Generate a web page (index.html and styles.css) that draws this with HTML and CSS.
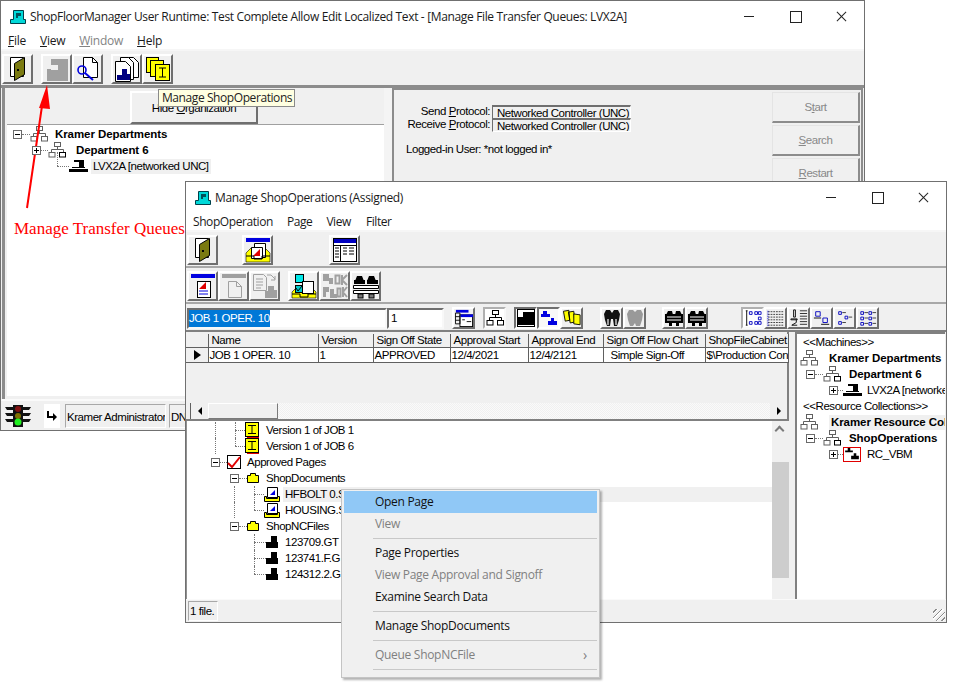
FILE: index.html
```html
<!DOCTYPE html>
<html lang="en">
<head>
<meta charset="utf-8">
<title>ShopFloorManager</title>
<link rel="stylesheet" href="styles.css">
</head>
<body>
<svg class="defs" width="0" height="0">
  <symbol id="app" viewBox="0 0 16 16"><path d="M3.500 1.500h10v9h2v4h-15v-4h3z" fill="#00d8d8" stroke="#00404a"/><path d="M6 4h5v3H8v2H6z" fill="#00505a"/></symbol>
  <symbol id="door" viewBox="0 0 26 26"><path d="M5.500 1.500h13v19h-13z" fill="#fff" stroke="#000"/><path d="M19.500 1.500v17l-10 6v-17z" fill="#7a7a10" stroke="#000"/><rect x="12" y="13" width="2" height="2" fill="#000"/></symbol>
  <symbol id="mach-off" viewBox="0 0 26 26"><path d="M7 3h17v11H14V9H7z" fill="#a0a0a0"/><path d="M3 14h21v11H3z" fill="#a0a0a0"/><path d="M3 13h4v1H3z" fill="#a0a0a0"/></symbol>
  <symbol id="docfind" viewBox="0 0 26 26"><path d="M8.500 1.500h9l5 5v15h-14z" fill="#fff" stroke="#000"/><path d="M17.500 1.500v5h5" fill="none" stroke="#000"/><circle cx="7" cy="14" r="4" fill="none" stroke="#0000e0" stroke-width="1.600"/><path d="M10 17l8 7" stroke="#0000e0" stroke-width="2"/></symbol>
  <symbol id="docs" viewBox="0 0 26 26"><path d="M11.500 1.500h8l5 5v15h-13z" fill="#fff" stroke="#000"/><path d="M6.500 1.500h8l5 5v17h-13z" fill="#fff" stroke="#000"/><path d="M1.500 5.500h10l5 5v15h-15z" fill="#fff" stroke="#000"/><path d="M8 13h5v5h3v6H3v-5h5z" fill="#000080"/></symbol>
  <symbol id="yellows" viewBox="0 0 26 26"><rect x="1.500" y="1.500" width="12" height="15" fill="#ffff00" stroke="#000"/><rect x="5.500" y="4.500" width="13" height="16" fill="#ffff00" stroke="#000"/><rect x="10.500" y="8.500" width="14" height="16" fill="#ffff00" stroke="#000"/><path d="M14 12h7M17.500 12v9M14 21h7" stroke="#000" fill="none"/></symbol>
  <symbol id="inbox" viewBox="0 0 26 26"><rect x="1" y="1" width="24" height="4" fill="#0000e0"/><path d="M1 16l5-5h14l5 5v9H1z" fill="#ffff00" stroke="#000" stroke-width=".6"/><path d="M9.500 6.500h11v14h-11z" fill="#fff" stroke="#000"/><path d="M6.500 10.500h11v11h-11z" fill="#fff" stroke="#000"/><path d="M15 12v7H8z" fill="#e00000"/><path d="M1 19h8v3h8v-3h8" fill="none" stroke="#000"/></symbol>
  <symbol id="table" viewBox="0 0 26 26"><rect x="1.500" y="1.500" width="23" height="23" fill="#fff" stroke="#000"/><rect x="2" y="2" width="22" height="4" fill="#0000c0"/><path d="M2 8.500h22M8.500 8v16M11 11h4M17 11h5M11 14h4M17 14h5M11 17h4M17 17h5M3 11h4M3 14h4M3 17h4M3 20h4" stroke="#000" fill="none"/></symbol>
  <symbol id="page" viewBox="0 0 26 26"><rect x="1" y="1" width="24" height="4" fill="#0000e0"/><rect x="7.500" y="8.500" width="13" height="16" fill="#fff" stroke="#000"/><path d="M16 9v7H9z" fill="#e00000"/><path d="M9 18h9M9 21h9" stroke="#0000e0"/></symbol>
  <symbol id="page-off" viewBox="0 0 26 26"><rect x="1" y="1" width="24" height="4" fill="#a0a0a0"/><path d="M7.500 8.500h8l5 5v11h-13z" fill="none" stroke="#a0a0a0"/><path d="M15.500 8.500v5h5" fill="none" stroke="#a0a0a0"/></symbol>
  <symbol id="copy-off" viewBox="0 0 26 26"><path d="M1.500 1.500h10l3 3v13h-13z" fill="none" stroke="#a0a0a0"/><path d="M4 6h7M4 9h7M4 12h7M4 15h5M15 2h4l4 4M23 3v4h-4" stroke="#a0a0a0" fill="none"/><path d="M16 13h6v4h3v8H13v-7h3z" fill="#a0a0a0"/></symbol>
  <symbol id="flow" viewBox="0 0 26 26"><rect x="4.500" y="1.500" width="8" height="8" fill="#00e8e8" stroke="#000"/><path d="M1 19l3-3h18l3 3v6H1z" fill="#ffff00" stroke="#000" stroke-width=".6"/><rect x="11.500" y="8.500" width="11" height="12" fill="#fff" stroke="#000"/><rect x="4.500" y="12.500" width="7" height="7" fill="#00c8c8" stroke="#000"/><path d="M5 15l2 3 4-5" stroke="#000" fill="none"/><path d="M1 21h8v3h8v-3h8" fill="none" stroke="#000"/></symbol>
  <symbol id="ok-off" viewBox="0 0 26 26"><path d="M1 1h6v4h4v6H7V8H1zM1 14h6v5H4v5H1zM8 16h4v5h3v4H8z" fill="#a0a0a0"/><path d="M13.500 2.500h4v8h-4zM20 2v10M20 7l5-5M20 7l5 5M15.500 15.500h3v8h-3zM21 14v10M21 19l4-5M21 19l4 5" fill="none" stroke="#a0a0a0" stroke-width="2"/></symbol>
  <symbol id="binwall" viewBox="0 0 26 26"><path d="M2 8l2-5h5l2 5zM14 8l2-5h5l2 5z" fill="#000"/><rect x="1" y="7" width="11" height="4"/><rect x="14" y="7" width="11" height="4"/><path d="M.5 12.500h25v3H.5zM.5 17.500h25v3H.5z" fill="#fff" stroke="#000"/><rect x="5" y="21" width="5" height="4" fill="#777" stroke="#000"/><rect x="16" y="21" width="5" height="4" fill="#777" stroke="#000"/></symbol>
  <symbol id="grid-ico" viewBox="0 0 20 20"><rect x="1" y="1" width="14" height="3" fill="#0000e0"/><rect x="5.500" y="6.500" width="14" height="13" fill="#fff" stroke="#000"/><rect x="6" y="6" width="14" height="3" fill="#0000e0"/><path d="M.5 4.500h5v12h-5zM.5 8.500h5M.5 12.500h5M8 12h3M13 14h5" stroke="#000" fill="none"/></symbol>
  <symbol id="org" viewBox="0 0 18 16"><rect x="6.500" y=".5" width="6" height="4" fill="#fff" stroke="#606060"/><path d="M9.500 4.500v3M3.500 10.500v-3h12v3" fill="none" stroke="#606060"/><rect x="1" y="10.500" width="6" height="4.500" fill="#fff" stroke="#606060"/><rect x="11.500" y="10.500" width="6" height="4.500" fill="#fff" stroke="#606060"/></symbol>
  <symbol id="org-sel" viewBox="0 0 18 16"><rect x="6.500" y=".5" width="6" height="4" fill="#fff" stroke="#606060"/><path d="M9.500 4.500v3M3.500 10.500v-3h12v3" fill="none" stroke="#606060"/><rect x="1" y="10.500" width="6" height="4.500" fill="#fff" stroke="#606060"/><rect x="11.500" y="10.500" width="6" height="4.500" fill="#fff" stroke="#000"/></symbol>
  <symbol id="org-b" viewBox="0 0 18 16"><rect x="6.500" y=".5" width="6" height="4" fill="#fff" stroke="#000"/><path d="M9.500 4.500v3M3.500 10.500v-3h12v3" fill="none" stroke="#000"/><rect x="1" y="10.500" width="6" height="4.500" fill="#fff" stroke="#000"/><rect x="11.500" y="10.500" width="6" height="4.500" fill="#fff" stroke="#000"/></symbol>
  <symbol id="mach" viewBox="0 0 19 14"><path d="M5 1h10v2H5zM10 3h5v5h-5zM3 8h13v1H3zM0 10h19v3H0z" fill="#000"/></symbol>
  <symbol id="ibeam" viewBox="0 0 14 16"><rect x=".5" y=".5" width="13" height="14" fill="#ffff00" stroke="#000"/><path d="M3 3.500h8M7 3.500v8M3 11.500h8" stroke="#000" fill="none"/><path d="M2 15.500h12" stroke="#e00000"/></symbol>
  <symbol id="check" viewBox="0 0 14 14"><rect x=".5" y=".5" width="13" height="13" fill="#fff" stroke="#000"/><path d="M1 8l4 4 8-10" fill="none" stroke="#e00000" stroke-width="2"/></symbol>
  <symbol id="folder" viewBox="0 0 12 10"><path d="M.5 2.500h3v-2h5v2h3v7H.5z" fill="#ffff00" stroke="#000"/></symbol>
  <symbol id="trayp" viewBox="0 0 16 16"><path d="M3.500 1.500h10v10h-10z" fill="#fff" stroke="#000"/><path d="M11 4v5H6z" fill="#0000e0"/><path d="M.5 10.500h2v2h11v-2h2v5H.5z" fill="#ffff00" stroke="#000"/></symbol>
  <symbol id="block" viewBox="0 0 12 12"><path d="M5 0h6v6h1v6H0V6h5z" fill="#000"/></symbol>
  <symbol id="blocks2" viewBox="0 0 16 14"><path d="M3 0h3v3h3v2H0V3h3zM10 6h3v3h3v4H7V9h3z" fill="#000"/></symbol>
  <symbol id="bigblock" viewBox="0 0 18 18"><rect width="18" height="18"/><path d="M1 1h5v7H1z" fill="#fff"/><path d="M6 1h11v2H6zM1 16h16v1H1z" fill="#fff"/></symbol>
  <symbol id="blueblocks" viewBox="0 0 18 18"><path d="M3 2h4v3h3v3H1V5h2zM11 9h3v3h3v4H8v-4h3z" fill="#0000e0"/></symbol>
  <symbol id="yellow3" viewBox="0 0 20 18"><path d="M.5 1.500l6-1 1 11-5 1zM6 2.500l6-1 1 12-5 1z" fill="#ffff00" stroke="#000"/><path d="M12 4.500l7 1v11l-7-1z" fill="#ffff00" stroke="#000"/></symbol>
  <symbol id="binoc" viewBox="0 0 18 18"><path d="M3 1h4l2 3 2-3h4l2 4-1 6-2 6h-3l-1-7H8l-1 7H4L2 11 1 5z" fill="#111"/><path d="M5 10v6M13 10v6" stroke="#999" stroke-width="2"/></symbol>
  <symbol id="binoc-off" viewBox="0 0 18 18"><path d="M3 1h4l2 2 2-2h4l2 4-1 6-2 6h-4l-1-3-2 3H4L2 11 1 5z" fill="#999"/></symbol>
  <symbol id="binwall-s" viewBox="0 0 18 18"><path d="M1 6l2-4h4l1 4zM10 6l1-4h4l2 4z" fill="#000"/><rect y="5" width="18" height="9" fill="#000"/><path d="M2 8h14M2 11h14" stroke="#fff"/><rect x="4" y="14" width="3" height="3"/><rect x="11" y="14" width="3" height="3"/></symbol>
  <symbol id="v1" viewBox="0 0 20 20"><path d="M2 2h2M2 18h2M3 2v16" stroke="#000"/><path d="M6 3h3v3H6zM12 3h3v3h-3zM6 14h3v3H6zM12 14h3v3h-3zM16 9h3v3h-3zM16 3h3v3h-3zM16 14h3v3h-3z" fill="none" stroke="#0000c0"/></symbol>
  <symbol id="v2" viewBox="0 0 20 20"><path d="M1 3h18M1 6h18M1 9h18M1 12h18M1 15h18M1 18h18" stroke="#333" stroke-dasharray="2 1"/><path d="M1 2v17" stroke="#0000e0" stroke-dasharray="1 1"/></symbol>
  <symbol id="v3" viewBox="0 0 20 20"><path d="M4 1h2v8H4zM1 11h7v1H1zM7 12v3L2 18h6" stroke="#000" fill="none"/><path d="M11 2h8M11 5h8M11 8h8M11 11h8M11 14h8M11 17h8" stroke="#222"/></symbol>
  <symbol id="v4" viewBox="0 0 20 20"><path d="M3 3h5v5H3zM11 10h5v5h-5z" fill="none" stroke="#0000c0"/><path d="M1 10h8M9 17h9" stroke="#000"/></symbol>
  <symbol id="v5" viewBox="0 0 20 20"><path d="M3 3h3v3H3zM10 8h3v3h-3zM3 14h3v3H3z" fill="none" stroke="#0000c0"/><path d="M7 4h4M14 9h4M7 15h4" stroke="#333"/></symbol>
  <symbol id="v6" viewBox="0 0 20 20"><path d="M2 3h3v3H2zM11 3h3v3h-3zM2 9h3v3H2zM11 9h3v3h-3zM2 15h3v3H2zM11 15h3v3h-3z" fill="none" stroke="#0000c0"/><path d="M6 4h4M15 4h4M6 10h4M15 10h4M6 16h4M15 16h4" stroke="#333"/></symbol>
  <symbol id="light" viewBox="0 0 26 22"><path d="M8 0h10v22H8z" fill="#111"/><path d="M0 2h8v3H2zM26 2h-8v3h6zM0 8h8v3H2zM26 8h-8v3h6zM0 14h8v3H2zM26 14h-8v3h6z" fill="#111"/><circle cx="13" cy="4" r="3" fill="#801010"/><circle cx="13" cy="11" r="3" fill="#807000"/><circle cx="13" cy="17" r="3.500" fill="#20f020"/></symbol>
  <symbol id="bend" viewBox="0 0 12 12"><path d="M2 1v6h7" fill="none" stroke="#000" stroke-width="2"/><path d="M7 3l4 4-4 4z" fill="#000"/></symbol>
</svg>

<section class="win win-back">
  <header class="title"><svg class="ti"><use href="#app"/></svg><span class="ttext">ShopFloorManager User Runtime: Test Complete Allow Edit Localized Text - [Manage File Transfer Queues: LVX2A]</span>
    <span class="caps"><i class="cap-min"></i><i class="cap-max"></i><i class="cap-x"></i></span></header>
  <nav class="menu m1"><span class="mi-file"><u>F</u>ile</span><span class="mi-view"><u>V</u>iew</span><span class="mi-win off"><u>W</u>indow</span><span class="mi-help"><u>H</u>elp</span></nav>
  <div class="bar bar1">
    <button class="btn"><svg class="big"><use href="#door"/></svg></button>
    <button class="btn gap8"><svg class="big"><use href="#mach-off"/></svg></button>
    <button class="btn"><svg class="big"><use href="#docfind"/></svg></button>
    <button class="btn gap8"><svg class="big"><use href="#docs"/></svg></button>
    <button class="btn"><svg class="big"><use href="#yellows"/></svg></button>
  </div>
  <div class="body1">
    <div class="left1">
      <div class="hidewrap"><button class="hide">Hide <u>O</u>rganization</button></div>
      <div class="tree tree1">
        <div class="row r1a"><i class="exp minus"></i><i class="dot w8"></i><svg class="org"><use href="#org"/></svg><b class="lb ml9">Kramer Departments</b></div>
        <div class="row r1b"><i class="exp plus"></i><i class="dot w7"></i><svg class="org"><use href="#org-sel"/></svg><b class="lb ml10">Department 6</b></div>
        <div class="row r1c"><i class="dot w12"></i><svg class="mach"><use href="#mach"/></svg><span class="lb ml3 sel">LVX2A [networked UNC]</span></div>
      </div>
    </div>
    <div class="split"></div>
    <div class="right1">
      <div class="proto">
        <div class="protorow"><span class="plabel">Send <u>P</u>rotocol:</span><span class="pval">Networked Controller (UNC)</span></div>
        <div class="protorow"><span class="plabel">Receive <u>P</u>rotocol:</span><span class="pval">Networked Controller (UNC)</span></div>
        <p class="logged">Logged-in User: *not logged in*</p>
      </div>
      <div class="actions">
        <button class="act">S<u>t</u>art</button>
        <button class="act"><u>S</u>earch</button>
        <button class="act"><u>R</u>estart</button>
      </div>
    </div>
  </div>
  <footer class="status1">
    <svg class="light"><use href="#light"/></svg>
    <span class="bendbox"><svg class="bend"><use href="#bend"/></svg></span>
    <span class="spanel admin">Kramer Administrator</span>
    <span class="spanel dn">DN</span>
  </footer>
</section>

<div class="tip">Manage ShopOperations</div>
<div class="note">Manage Transfer Queues</div>
<svg class="arrow" width="60" height="150" viewBox="0 0 60 150"><path d="M27 130L42 28" stroke="#f00" stroke-width="2" fill="none"/><path d="M47 7L39 30L50 31z" fill="#f00"/></svg>

<section class="win win-front">
  <header class="title t2"><svg class="ti"><use href="#app"/></svg><span class="ttext">Manage ShopOperations (Assigned)</span>
    <span class="caps"><i class="cap-min"></i><i class="cap-max"></i><i class="cap-x"></i></span></header>
  <nav class="menu m2"><span class="mi-op">ShopOperation</span><span class="mi-page">Page</span><span class="mi-v2">View</span><span>Filter</span></nav>
  <div class="bar bar21">
    <button class="btn"><svg class="big"><use href="#door"/></svg></button>
    <button class="btn gap24"><svg class="big"><use href="#inbox"/></svg></button>
    <button class="btn gap56"><svg class="big"><use href="#table"/></svg></button>
  </div>
  <div class="bar bar22">
    <button class="btn"><svg class="big"><use href="#page"/></svg></button>
    <button class="btn"><svg class="big"><use href="#page-off"/></svg></button>
    <button class="btn"><svg class="big"><use href="#copy-off"/></svg></button>
    <button class="btn gap8"><svg class="big"><use href="#flow"/></svg></button>
    <button class="btn"><svg class="big"><use href="#ok-off"/></svg></button>
    <button class="btn"><svg class="big"><use href="#binwall"/></svg></button>
  </div>
  <div class="bar bar23">
    <span class="field jobf"><span class="picked">JOB 1 OPER. 10</span></span>
    <span class="field numf">1</span>
    <button class="sb g8"><svg class="sm"><use href="#grid-ico"/></svg></button>
    <button class="sb g8 latch"><svg class="sm"><use href="#org-b"/></svg></button>
    <button class="sb g8 down"><svg class="sm"><use href="#bigblock"/></svg></button>
    <button class="sb down"><svg class="sm"><use href="#blueblocks"/></svg></button>
    <button class="sb"><svg class="sm"><use href="#yellow3"/></svg></button>
    <button class="sb g17"><svg class="sm"><use href="#binoc"/></svg></button>
    <button class="sb"><svg class="sm"><use href="#binoc-off"/></svg></button>
    <button class="sb g16"><svg class="sm"><use href="#binwall-s"/></svg></button>
    <button class="sb"><svg class="sm"><use href="#binwall-s"/></svg></button>
    <button class="sb g33 latch"><svg class="sm"><use href="#v1"/></svg></button>
    <button class="sb"><svg class="sm"><use href="#v2"/></svg></button>
    <button class="sb"><svg class="sm"><use href="#v3"/></svg></button>
    <button class="sb"><svg class="sm"><use href="#v4"/></svg></button>
    <button class="sb"><svg class="sm"><use href="#v5"/></svg></button>
    <button class="sb"><svg class="sm"><use href="#v6"/></svg></button>
  </div>
  <div class="work">
    <div class="maincol">
      <div class="gridbox">
        <table class="grid">
          <colgroup><col class="c0"><col class="c1"><col class="c2"><col class="c3"><col class="c4"><col class="c5"><col class="c6"><col class="c7"></colgroup>
          <thead><tr><th></th><th>Name</th><th>Version</th><th>Sign Off State</th><th>Approval Start</th><th>Approval End</th><th>Sign Off Flow Chart</th><th>ShopFileCabinet</th></tr></thead>
          <tbody><tr><td class="ptr"><i class="tri-r"></i></td><td>JOB 1 OPER. 10</td><td>1</td><td>APPROVED</td><td>12/4/2021</td><td>12/4/2121</td><td class="ind">Simple Sign-Off</td><td>$\Production Control</td></tr></tbody>
        </table>
        <div class="hscroll"><span class="hgap"></span><span class="arrowbtn"><i class="tri-l"></i></span><span class="hthumb"></span><span class="htrack"></span><span class="arrowbtn"><i class="tri-r small"></i></span></div>
      </div>
      <div class="treewrap">
        <div class="tree tree2">
          <div class="row p47"><i class="gd g27"></i><i class="gd g47 full"></i><i class="dot w10"></i><svg class="i14"><use href="#ibeam"/></svg><span class="lb ml7">Version 1 of JOB 1</span></div>
          <div class="row p47"><i class="gd g27"></i><i class="gd g47 half"></i><i class="dot w10"></i><svg class="i14"><use href="#ibeam"/></svg><span class="lb ml7">Version 1 of JOB 6</span></div>
          <div class="row p23"><i class="exp minus"></i><i class="dot w7"></i><svg class="i14s"><use href="#check"/></svg><span class="lb ml6">Approved Pages</span></div>
          <div class="row p42"><i class="exp minus"></i><i class="dot w8"></i><svg class="fold"><use href="#folder"/></svg><span class="lb ml7">ShopDocuments</span></div>
          <div class="row p66"><i class="gd g46"></i><i class="gd g66 full"></i><i class="dot w10"></i><svg class="i16"><use href="#trayp"/></svg><span class="lb sel grow">HFBOLT 0.SLDPRT</span></div>
          <div class="row p66"><i class="gd g46"></i><i class="gd g66 half"></i><i class="dot w10"></i><svg class="i16"><use href="#trayp"/></svg><span class="lb ml5">HOUSING.SLDPRT</span></div>
          <div class="row p42"><i class="exp minus"></i><i class="dot w8"></i><svg class="fold"><use href="#folder"/></svg><span class="lb ml7">ShopNCFiles</span></div>
          <div class="row p66"><i class="gd g66 full"></i><i class="dot w12"></i><svg class="i12"><use href="#block"/></svg><span class="lb ml7">123709.GT</span></div>
          <div class="row p66"><i class="gd g66 full"></i><i class="dot w12"></i><svg class="i12"><use href="#block"/></svg><span class="lb ml7">123741.F.G</span></div>
          <div class="row p66"><i class="gd g66 half"></i><i class="dot w12"></i><svg class="i12"><use href="#block"/></svg><span class="lb ml7">124312.2.G</span></div>
        </div>
        <div class="vscroll"><span class="varrow"><i class="chev"></i></span><span class="vtrack1"></span><span class="vthumb"></span><span class="vtrack2"></span></div>
      </div>
    </div>
    <aside class="side">
      <div class="row sp8"><span class="lb">&lt;&lt;Machines&gt;&gt;</span></div>
      <div class="row sp4"><svg class="org"><use href="#org"/></svg><b class="lb ml11">Kramer Departments</b></div>
      <div class="row sp10"><i class="exp minus"></i><i class="dot w8"></i><svg class="org"><use href="#org-sel"/></svg><b class="lb ml8">Department 6</b></div>
      <div class="row sp33"><i class="exp plus"></i><i class="dot w5"></i><svg class="mach"><use href="#mach"/></svg><span class="lb ml5 nowrap">LVX2A [networked UNC]</span></div>
      <div class="row sp8"><span class="lb">&lt;&lt;Resource Collections&gt;&gt;</span></div>
      <div class="row sp4"><svg class="org"><use href="#org"/></svg><b class="lb ml11 sel grow nowrap">Kramer Resource Collections</b></div>
      <div class="row sp10"><i class="exp minus"></i><i class="dot w8"></i><svg class="org"><use href="#org-sel"/></svg><b class="lb ml8">ShopOperations</b></div>
      <div class="row sp33"><i class="exp plus"></i><i class="dot w5"></i><span class="redbox"><svg class="rc"><use href="#blocks2"/></svg></span><span class="lb ml6">RC_VBM</span></div>
    </aside>
  </div>
  <footer class="status2"><span class="files">1 file.</span><i class="grip"></i></footer>
</section>

<div class="ctx">
  <div class="ci hot">Open Page</div>
  <div class="ci off">View</div>
  <div class="sep"></div>
  <div class="ci">Page Properties</div>
  <div class="ci off">View Page Approval and Signoff</div>
  <div class="ci">Examine Search Data</div>
  <div class="sep"></div>
  <div class="ci">Manage ShopDocuments</div>
  <div class="sep"></div>
  <div class="ci off">Queue ShopNCFile<span class="more">›</span></div>
  <div class="sep"></div>
</div>
</body>
</html>
```

FILE: styles.css
```css
* { box-sizing: border-box; }
html, body { margin: 0; padding: 0; background: #fff; }
body { width: 963px; height: 700px; overflow: hidden; position: relative; font: 11.5px/14px "Liberation Sans", Arial, sans-serif; letter-spacing: -.45px; color: #000; }
.defs { position: absolute; }
svg { display: block; flex: none; }
i { display: block; flex: none; font-style: normal; }
button { font: inherit; letter-spacing: inherit; padding: 0; margin: 0; color: inherit; }

.win { position: absolute; background: #f0f0f0; border: 1px solid #707070; display: flex; flex-direction: column; overflow: hidden; }
.win-back { left: 0; top: 0; width: 865px; height: 431px; }
.win-front { left: 185px; top: 181px; width: 762px; height: 442px; }

.title { height: 31px; flex: none; background: #fff; display: flex; align-items: center; padding-left: 9px; font: 12px/16px "Open Sans", sans-serif; color: #1a1a1a; white-space: nowrap; letter-spacing: -.35px; }
.ti { width: 16px; height: 16px; margin-right: 4px; }
.ttext { flex: 1; }
.caps { display: flex; flex: none; width: 138px; height: 31px; letter-spacing: 0; }
.caps i { width: 46px; height: 31px; position: relative; }
.cap-min::after { content: ""; position: absolute; left: 18px; top: 15px; width: 10px; height: 1px; background: #222; }
.cap-max::after { content: ""; position: absolute; left: 18px; top: 10px; width: 10px; height: 10px; border: 1px solid #222; }
.cap-x::before, .cap-x::after { content: ""; position: absolute; left: 17px; top: 15px; width: 13px; height: 1px; background: #222; transform: rotate(45deg); }
.cap-x::after { transform: rotate(-45deg); }

.menu { flex: none; background: #fff; height: 19px; display: flex; font: 12px/17px "Open Sans", sans-serif; letter-spacing: -.25px; color: #1a1a1a; border-bottom: 2px solid #f6f6f6; }
.m1 { padding-left: 7px; }
.m2 { padding-left: 7px; letter-spacing: -.42px; }
.mi-file { margin-right: 14px; }
.mi-view { margin-right: 14px; }
.mi-win { margin-right: 14px; }
.mi-op { margin-right: 14px; }
.mi-page { margin-right: 14px; }
.mi-v2 { margin-right: 15px; }
.off { color: #838383; }

.bar { flex: none; display: flex; background: #f0f0f0; }
.bar1 { height: 37px; padding: 3px 0 0 1px; border-bottom: 3px solid #8c8c8c; }
.bar21 { height: 36px; padding: 3px 0 0 1px; border-bottom: 2px solid #a8a8a8; }
.bar22 { height: 36px; padding: 3px 0 0 1px; border-bottom: 2px solid #a8a8a8; }
.bar23 { height: 28px; padding: 3px 0 0 1px; align-items: flex-start; border-bottom: 2px solid #808080; }

.btn { width: 31px; height: 30px; border: 2px solid; border-color: #fff #6f6f6f #6f6f6f #fff; background: #f0f0f0; display: flex; align-items: center; justify-content: center; }
.big { width: 26px; height: 26px; }
.gap8 { margin-left: 8px; }
.gap24 { margin-left: 24px; }
.gap56 { margin-left: 56px; }

.sb { width: 23px; height: 22px; border: 2px solid; border-color: #fff #6f6f6f #6f6f6f #fff; background: #f0f0f0; display: flex; align-items: center; justify-content: center; }
.sm { width: 18px; height: 18px; }
.sb.down { border-color: #6f6f6f #fff #fff #6f6f6f; background: #f8f8f8; }
.sb.latch { border-color: #b0b0b0 #f8f8f8 #f8f8f8 #b0b0b0; background: #fff; }
.g8 { margin-left: 8px; }
.g16 { margin-left: 16px; }
.g17 { margin-left: 17px; }
.g33 { margin-left: 33px; }
.field { height: 21px; margin-top: 1px; background: #fff; border: 2px solid; border-color: #6f6f6f #f8f8f8 #f8f8f8 #6f6f6f; line-height: 17px; }
.jobf { width: 200px; }
.numf { width: 57px; padding-left: 2px; }
.picked { background: #0078d7; color: #fff; display: inline-block; height: 17px; }

.body1 { flex: 1; display: flex; min-height: 0; background: #f0f0f0; }
.left1 { width: 382px; flex: none; padding-left: 5px; border-left: 3px solid #8c8c8c; margin-left: 1px; display: flex; flex-direction: column; padding-bottom: 3px; }
.hidewrap { flex: none; height: 36px; display: flex; justify-content: flex-start; padding-left: 120px; padding-top: 3px; }
.hide { width: 128px; height: 33px; border: 2px solid; border-color: #fff #6f6f6f #6f6f6f #fff; background: #f0f0f0; }
.tree { background: #fff; }
.tree1 { flex: 1; margin-left: -3px; padding-top: 1px; border-top: 1px solid #a0a0a0; }
.split { width: 8px; flex: none; background: #f4f4f4; }
.right1 { flex: 1; display: flex; border: 2px solid #8c8c8c; border-bottom: 0; margin-right: 1px; min-width: 0; }
.proto { flex: 1; padding-top: 15px; min-width: 0; }
.protorow { display: flex; height: 13px; line-height: 13px; }
.plabel { width: 96px; text-align: right; flex: none; }
.pval { width: 139px; height: 14px; flex: none; margin: 0 0 0 2px; border: 1px solid; border-color: #6f6f6f #fff #fff #6f6f6f; border-width: 2px 1px 1px 1px; padding-left: 4px; line-height: 12px; white-space: nowrap; overflow: hidden; }
.logged { margin: 11px 0 0 12px; }
.actions { width: 88px; flex: none; margin-right: 1px; display: flex; flex-direction: column; gap: 2px; padding-top: 2px; }
.act { height: 31px; flex: none; border: 1px solid; border-color: #e4e4e4; border-right: 2px solid #8c8c8c; border-bottom: 2px solid #8c8c8c; background: #f0f0f0; color: #888; }

.status1 { flex: none; height: 31px; display: flex; align-items: center; background: #f0f0f0; border-top: 2px solid #fafafa; padding-left: 4px; }
.light { width: 26px; height: 22px; margin-right: 13px; }
.bendbox { width: 16px; height: 24px; background: #fff; display: flex; align-items: center; justify-content: center; margin-right: 5px; }
.bend { width: 12px; height: 12px; }
.spanel { height: 24px; line-height: 24px; border: 1px solid; border-color: #a8a8a8 #fff #fff #a8a8a8; padding-left: 1px; white-space: nowrap; overflow: hidden; }
.admin { width: 101px; margin-right: 3px; }
.dn { width: 30px; }

.row { position: relative; height: 16px; display: flex; align-items: center; white-space: nowrap; }
.exp { width: 9px; height: 9px; border: 1px solid #6a6a6a; position: relative; background: #fff; z-index: 1; }
.exp::before { content: ""; position: absolute; left: 1px; top: 3px; width: 5px; height: 1px; background: #000; }
.plus::after { content: ""; position: absolute; left: 3px; top: 1px; width: 1px; height: 5px; background: #000; }
.dot { height: 1px; border-top: 1px dotted #777; }
.w5 { width: 5px; } .w7 { width: 7px; } .w8 { width: 8px; } .w10 { width: 10px; } .w12 { width: 12px; }
.org { width: 18px; height: 16px; }
.mach { width: 19px; height: 14px; }
.lb { line-height: 15px; color: #000; }
b.lb { letter-spacing: -.08px; }
.ml3 { margin-left: 3px; } .ml5 { margin-left: 5px; } .ml6 { margin-left: 6px; } .ml7 { margin-left: 7px; } .ml8 { margin-left: 8px; } .ml9 { margin-left: 9px; } .ml10 { margin-left: 10px; } .ml11 { margin-left: 11px; }
.sel { background: #f0f0f0; padding: 0 2px; }
.grow { flex: 1; }
.nowrap { white-space: nowrap; }
.r1a { padding-left: 6px; }
.r1a .lb { margin-left: 7px; }
.r1b { padding-left: 25px; }
.r1c { padding-left: 50px; }
.r1c::before { content: ""; position: absolute; left: 50px; top: -6px; height: 14px; border-left: 1px dotted #777; }

.work { flex: 1; display: flex; min-height: 0; background: #f0f0f0; }
.maincol { width: 603px; flex: none; display: flex; flex-direction: column; }
.gridbox { height: 89px; flex: none; border: 1px solid #808080; border-width: 0 2px 2px 0; display: flex; flex-direction: column; background: #f0f0f0; }
.grid { border-collapse: collapse; table-layout: fixed; width: 602px; flex: none; margin-top: 2px; }
.c0 { width: 22px; } .c1 { width: 110px; } .c2 { width: 55px; } .c3 { width: 77px; } .c4 { width: 78px; } .c5 { width: 75px; } .c6 { width: 102px; } .c7 { width: 83px; }
.grid th, .grid td { border: 1px solid #606060; font-weight: 400; text-align: left; padding: 0 0 0 1px; height: 13px; line-height: 13px; overflow: hidden; white-space: nowrap; }
.grid td { height: 15px; background: #fff; }
.grid th { background: #f0f0f0; border-top: 0; padding-left: 3px; }
.grid td.ptr { background: #f0f0f0; padding: 0; }
.grid th:first-child, .grid td:first-child { border-left: 0; }
.grid td.ind { padding-left: 7px; }
.tri-r { width: 0; height: 0; border-left: 7px solid #000; border-top: 5px solid transparent; border-bottom: 5px solid transparent; margin-left: 8px; }
.tri-r.small { border-left-width: 4px; border-top-width: 4px; border-bottom-width: 4px; margin: 0; }
.tri-l { width: 0; height: 0; border-right: 4px solid #000; border-top: 4px solid transparent; border-bottom: 4px solid transparent; }
.hscroll { margin-top: auto; height: 16px; flex: none; display: flex; background: #f0f0f0; }
.hgap { width: 5px; flex: none; border-right: 1px solid #606060; }
.arrowbtn { width: 17px; flex: none; display: flex; align-items: center; justify-content: center; background: #f0f0f0; }
.hthumb { width: 70px; flex: none; border: 1px solid; border-color: #fff #7a7a7a #7a7a7a #fff; background: #f0f0f0; }
.htrack { flex: 1; background: repeating-conic-gradient(#f0f0f0 0 25%, #fafafa 0 50%) 0 0 / 2px 2px; }

.treewrap { flex: 1; display: flex; min-height: 0; }
.tree2 { flex: 1; padding: 1px 0 0 1px; overflow: hidden; border-left: 1px solid #909090; }
.p47 { padding-left: 47px; } .p23 { padding-left: 23px; } .p42 { padding-left: 42px; } .p66 { padding-left: 66px; }
.gd { position: absolute; top: 0; height: 16px; border-left: 1px dotted #777; }
.gd.half { height: 8px; }
.g27 { left: 27px; } .g46 { left: 46px; } .g47 { left: 47px; } .g66 { left: 66px; }
.i14 { width: 14px; height: 16px; }
.i14s { width: 14px; height: 14px; }
.fold { width: 12px; height: 10px; }
.i16 { width: 16px; height: 16px; }
.i12 { width: 12px; height: 12px; }
.tree2 .sel { margin-left: 3px; }
.vscroll { width: 17px; flex: none; display: flex; flex-direction: column; background: #f0f0f0; }
.varrow { height: 17px; flex: none; position: relative; }
.chev { position: absolute; left: 4px; top: 6px; width: 7px; height: 7px; border: solid #7a7a7a; border-width: 2px 0 0 2px; transform: rotate(45deg); }
.vtrack1 { height: 24px; flex: none; }
.vthumb { height: 116px; flex: none; background: #cdcdcd; }
.vtrack2 { flex: 1; }
.side { flex: 1; margin-left: 6px; margin-right: 1px; background: #fff; border: 2px solid #808080; border-width: 2px 0 0 2px; overflow: hidden; position: relative; min-width: 0; }
.sp8 { padding-left: 6px; }
.sp4 { padding-left: 3px; }
.sp10 { padding-left: 9px; }
.sp33 { padding-left: 32px; }
.redbox { width: 18px; height: 15px; border: 1px solid #e00000; display: flex; align-items: center; justify-content: center; }
.rc { width: 14px; height: 12px; }

.status2 { flex: none; height: 23px; background: #f0f0f0; border-top: 1px solid #fafafa; display: flex; align-items: flex-end; padding: 0 0 1px 2px; position: relative; }
.files { width: 30px; height: 20px; line-height: 19px; border: 1px solid; border-color: #a8a8a8 #fff #fff #a8a8a8; padding-left: 1px; white-space: nowrap; overflow: hidden; }
.grip { position: absolute; right: 1px; bottom: 1px; width: 12px; height: 12px; background: repeating-linear-gradient(135deg, transparent 0 2px, #8c8c8c 2px 3px, #fff 3px 4px); }

.tip { position: absolute; left: 158px; top: 89px; width: 137px; height: 18px; background: #ffffe1; border: 1px solid #8a8a8a; font: 12px/16px "Open Sans", sans-serif; letter-spacing: -.42px; color: #222; padding-left: 3px; white-space: nowrap; }
.note { position: absolute; left: 14px; top: 220px; font: 17px/18px "Liberation Serif", serif; letter-spacing: 0; color: #f00; white-space: nowrap; }
.arrow { position: absolute; left: 0; top: 78px; }

.ctx { position: absolute; left: 341px; top: 489px; width: 259px; height: 189px; background: #f0f0f0; border: 1px solid #c4c4c4; padding: 1px 2px; box-shadow: 2px 2px 2px rgba(0,0,0,.3); font: 12px/22px "Open Sans", sans-serif; letter-spacing: -.3px; color: #101010; }
.ci { height: 22px; padding-left: 31px; position: relative; white-space: nowrap; }
.ci.off { color: #808080; }
.hot { background: #90c8f6; }
.sep { height: 1px; margin: 3px 0 3px 29px; background: #c8c8c8; }
.more { position: absolute; right: 10px; top: 0; font-size: 14px; }
```
